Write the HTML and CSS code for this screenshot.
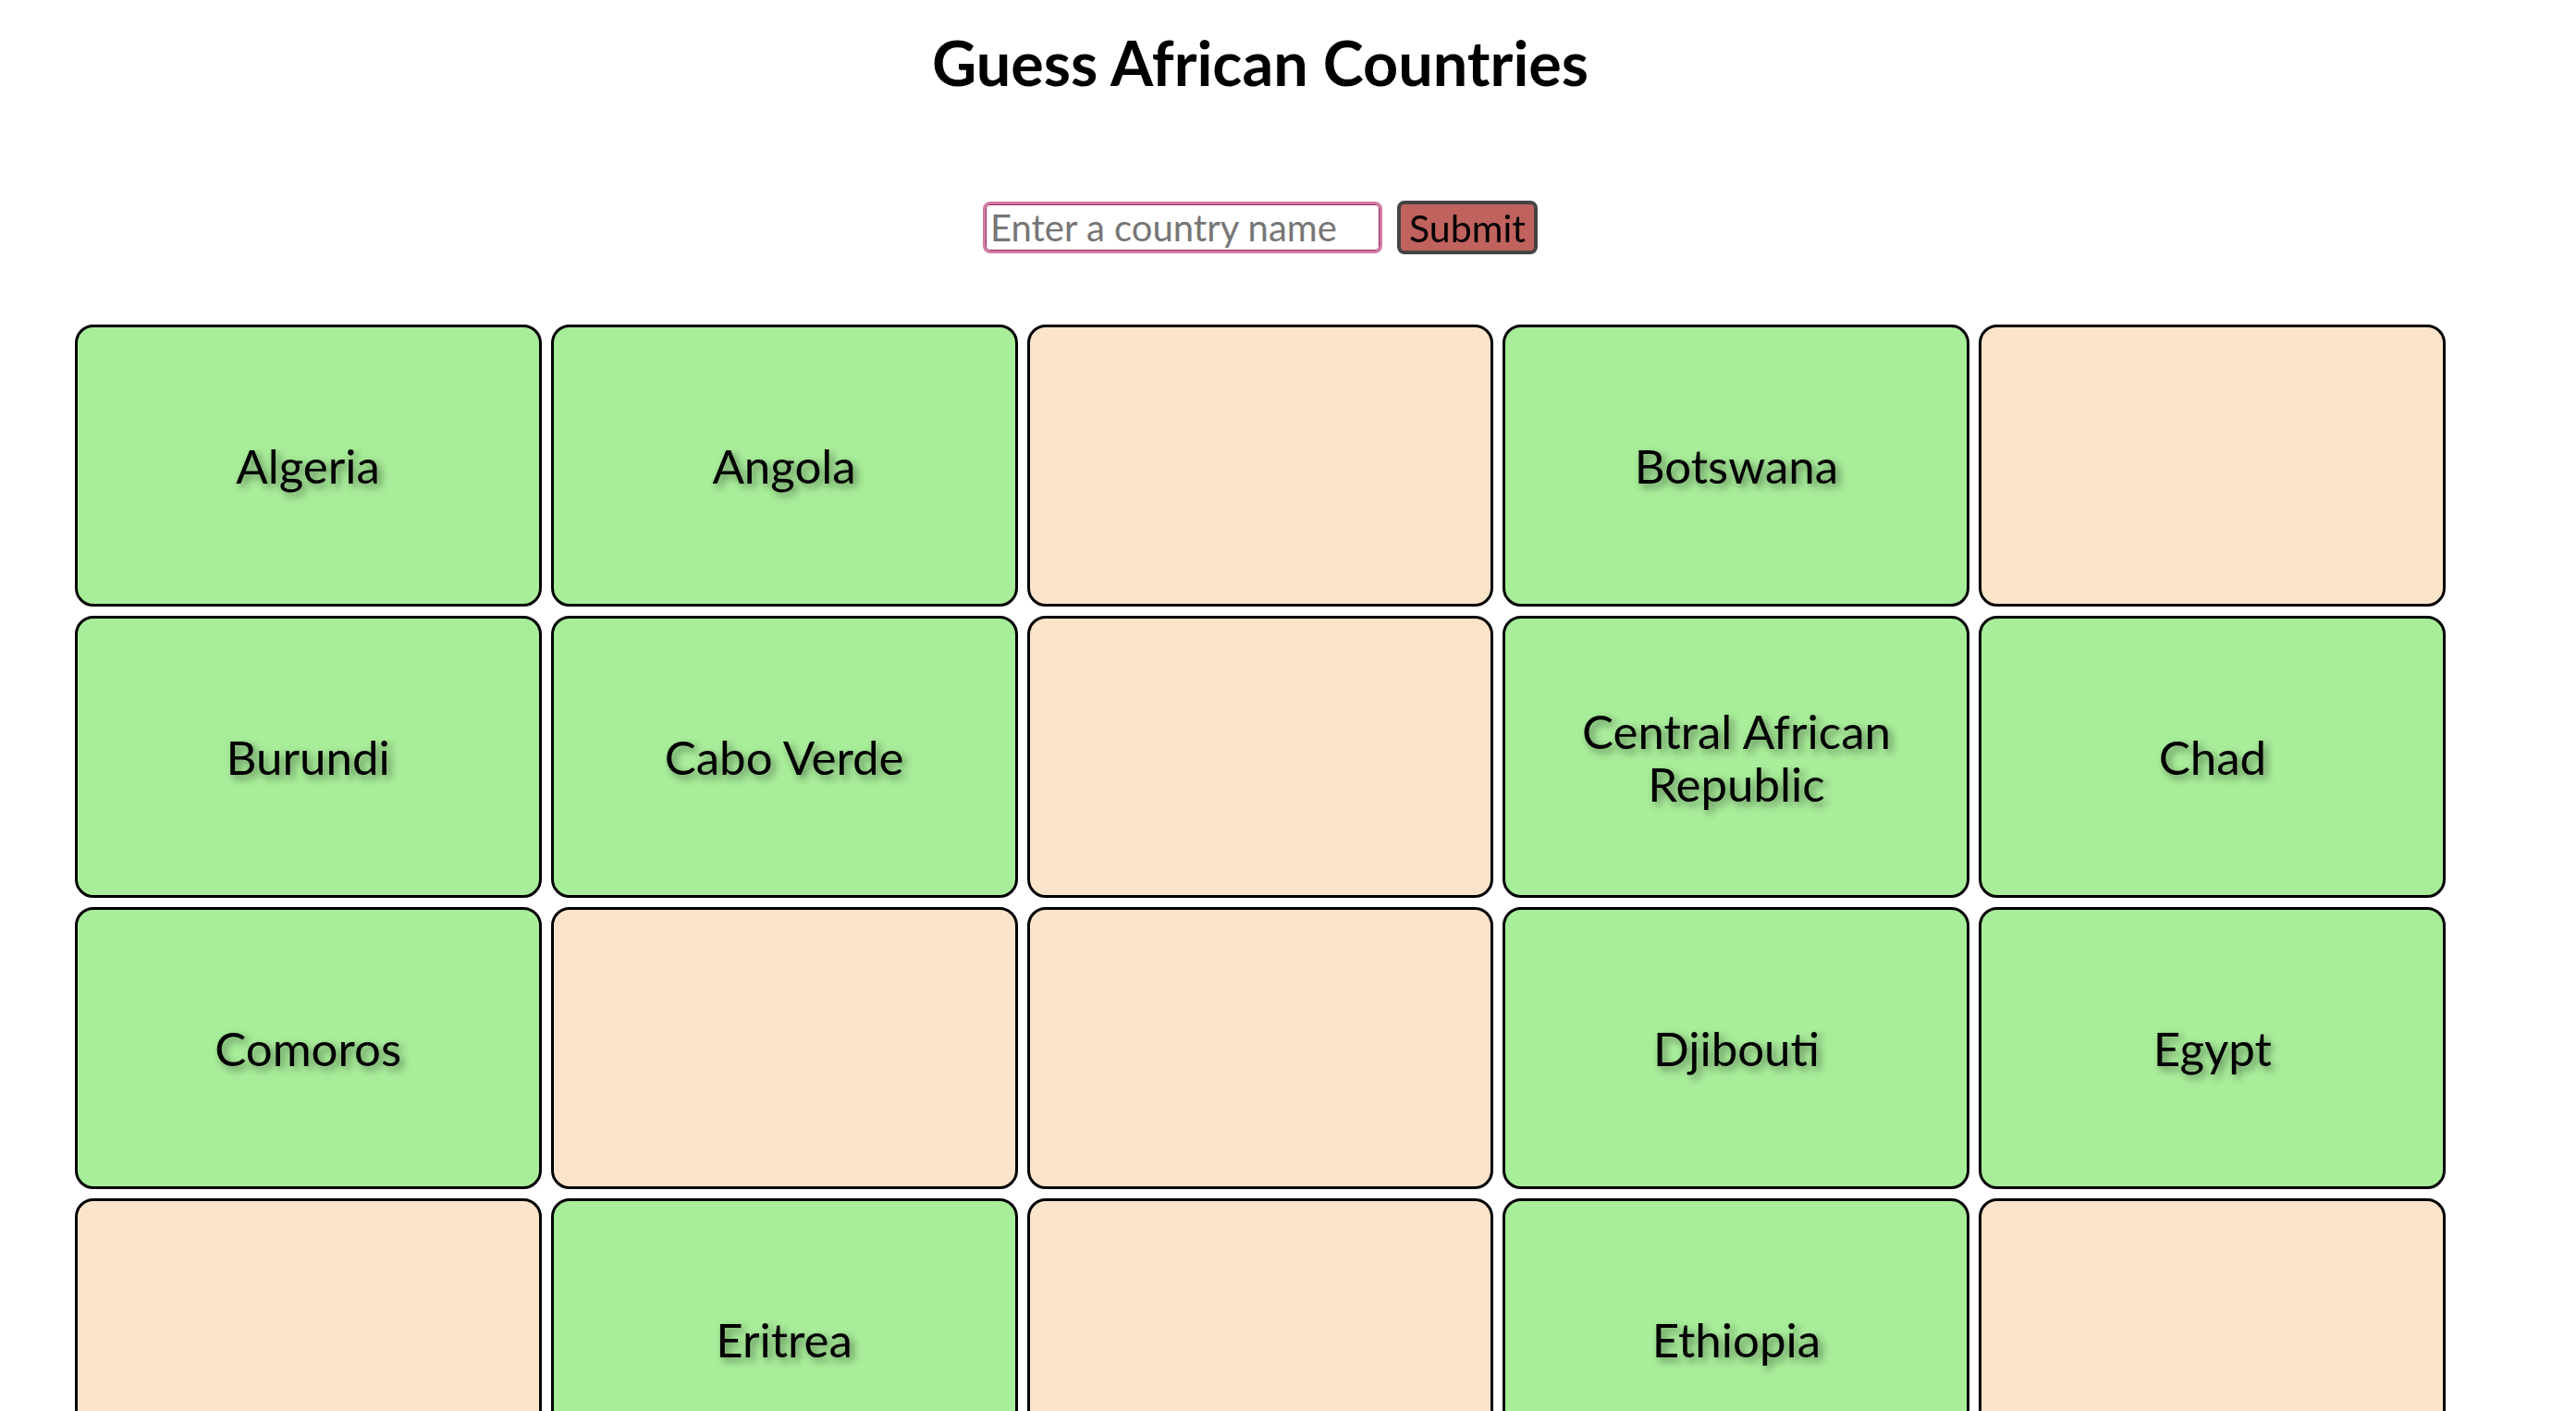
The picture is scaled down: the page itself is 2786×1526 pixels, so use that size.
FILE: index.html
```html
<!DOCTYPE html>
<html lang="en">
<head>
<meta charset="utf-8">
<title>Guess African Countries</title>
<link rel="stylesheet" href="styles.css">
</head>
<body>
<div class="page">
  <h1 class="title">Guess African Countries</h1>
  <form class="guess-form">
    <input class="guess-input" type="text" placeholder="Enter a country name" autofocus>
    <button class="guess-btn" type="button">Submit</button>
  </form>
  <div class="grid">
    <div class="tile found"><span>Algeria</span></div>
    <div class="tile found"><span>Angola</span></div>
    <div class="tile"></div>
    <div class="tile found"><span>Botswana</span></div>
    <div class="tile"></div>
    <div class="tile found"><span>Burundi</span></div>
    <div class="tile found"><span>Cabo Verde</span></div>
    <div class="tile"></div>
    <div class="tile found"><span>Central African Republic</span></div>
    <div class="tile found"><span>Chad</span></div>
    <div class="tile found"><span>Comoros</span></div>
    <div class="tile"></div>
    <div class="tile"></div>
    <div class="tile found"><span>Djibouti</span></div>
    <div class="tile found"><span>Egypt</span></div>
    <div class="tile"></div>
    <div class="tile found"><span>Eritrea</span></div>
    <div class="tile"></div>
    <div class="tile found"><span>Ethiopia</span></div>
    <div class="tile"></div>
    <div class="tile"></div>
    <div class="tile"></div>
    <div class="tile"></div>
    <div class="tile"></div>
    <div class="tile"></div>
  </div>
</div>
</body>
</html>
```

FILE: styles.css
```css
html, body {
  margin: 0;
  padding: 0;
  background: #ffffff;
}
body {
  font-family: "Lato", "Open Sans", "DejaVu Sans", sans-serif;
  color: #000;
  padding-right: 60px;
}
.page {
  padding: 0 16px;
}
.title {
  margin: 0;
  padding-top: 29px;
  font-size: 66.5px;
  font-weight: 700;
  text-align: center;
  line-height: 76px;
}
.guess-form {
  display: flex;
  justify-content: center;
  align-items: center;
  gap: 16px;
  margin-top: 112px;
}
.guess-input {
  box-sizing: border-box;
  width: 432px;
  height: 56px;
  border: 3px solid #d27aa6;
  box-shadow: inset 0 0 0 1px #9b2c5a;
  border-radius: 8px;
  padding: 0 5px;
  font-family: inherit;
  font-size: 40px;
  color: #000;
  outline: none;
  background: #fff;
}
.guess-input::placeholder {
  color: #767676;
}
.guess-btn {
  box-sizing: border-box;
  height: 58px;
  padding: 0 9px;
  background: #c0625d;
  border: 4px solid #444;
  border-radius: 8px;
  font-family: inherit;
  font-size: 41px;
  color: #000;
}
.grid {
  width: 95.2%;
  margin: 76px auto 0;
  display: grid;
  grid-template-columns: repeat(5, 1fr);
  grid-auto-rows: 305px;
  gap: 10px;
}
.tile {
  box-sizing: border-box;
  border: 3px solid #000;
  border-radius: 20px;
  background: #fbe4c9;
  display: flex;
  align-items: center;
  justify-content: center;
  text-align: center;
  padding: 0 20px;
}
.tile.found {
  background: #a8ed9a;
}
.tile span {
  font-size: 51px;
  line-height: 57px;
  text-shadow: 4px 4px 8px rgba(0, 0, 0, 0.45);
}
```
